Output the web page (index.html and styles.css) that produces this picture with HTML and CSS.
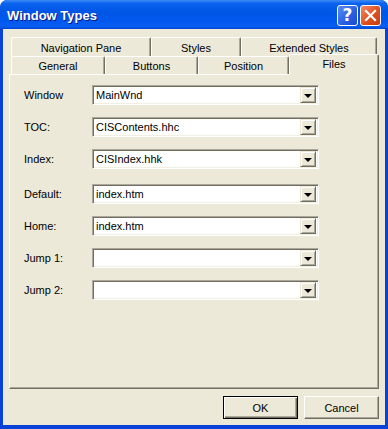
FILE: index.html
```html
<!DOCTYPE html>
<html lang="en">
<head>
  <meta charset="UTF-8" />
  <title>Window Types</title>
  <link rel="stylesheet" href="styles.css">
</head>
<body>
  <div class="window">
    <div class="titlebar">
      <span class="title">Window Types</span>
      <div class="caption-buttons">
        <span class="cap-btn help">?</span>
        <span class="cap-btn close">
          <svg viewBox="0 0 21 21" width="21" height="21">
            <path d="M6 6 L15 15 M15 6 L6 15" stroke="#fff" stroke-width="2.2" stroke-linecap="square" />
          </svg>
        </span>
      </div>
    </div>

    <div class="client">
      <div class="tabs">
        <div class="tab-row">
          <div class="tab w-nav">Navigation Pane</div>
          <div class="tab w-styles">Styles</div>
          <div class="tab w-ext">Extended Styles</div>
        </div>
        <div class="tab-row">
          <div class="tab w-general">General</div>
          <div class="tab w-buttons">Buttons</div>
          <div class="tab w-position">Position</div>
          <div class="tab w-files active">Files</div>
        </div>
      </div>

      <div class="panel">
        <div class="field">
          <span class="label">Window</span>
          <div class="combo"><span class="value">MainWnd</span><span class="drop"><i></i></span></div>
        </div>
        <div class="field">
          <span class="label">TOC:</span>
          <div class="combo"><span class="value">CISContents.hhc</span><span class="drop"><i></i></span></div>
        </div>
        <div class="field">
          <span class="label">Index:</span>
          <div class="combo"><span class="value">CISIndex.hhk</span><span class="drop"><i></i></span></div>
        </div>
        <div class="field spaced">
          <span class="label">Default:</span>
          <div class="combo"><span class="value">index.htm</span><span class="drop"><i></i></span></div>
        </div>
        <div class="field">
          <span class="label">Home:</span>
          <div class="combo"><span class="value">index.htm</span><span class="drop"><i></i></span></div>
        </div>
        <div class="field">
          <span class="label">Jump 1:</span>
          <div class="combo"><span class="value"></span><span class="drop"><i></i></span></div>
        </div>
        <div class="field">
          <span class="label">Jump 2:</span>
          <div class="combo"><span class="value"></span><span class="drop"><i></i></span></div>
        </div>
      </div>

      <div class="actions">
        <button class="btn default">OK</button>
        <button class="btn">Cancel</button>
      </div>
    </div>
  </div>
</body>
</html>
```

FILE: styles.css
```css
:root {
  --face: #ece9d8;
  --shadow: #aca899;
  --dark: #716f64;
  --light: #f1efe2;
  --frame: #0842d6;
}

html, body {
  margin: 0;
  padding: 0;
  background: #fff;
}

body {
  font-family: "Liberation Sans", Arial, sans-serif;
  font-size: 11px;
  color: #000;
}

.window {
  width: 388px;
  height: 429px;
  box-sizing: border-box;
  background: var(--frame);
  border-radius: 7px 7px 0 0;
  padding: 0 3px 4px 3px;
  display: flex;
  flex-direction: column;
  overflow: hidden;
}

/* Title bar */
.titlebar {
  height: 29px;
  margin: 0 -3px;
  padding: 0 7px;
  display: flex;
  align-items: center;
  justify-content: space-between;
  background: linear-gradient(#3d8cf5 0%, #0a63ee 12%, #0055e5 40%, #0058ee 75%, #0a5ff4 90%, #0046d4 100%);
  border-radius: 7px 7px 0 0;
}

.title {
  font-weight: bold;
  font-size: 13px;
  color: #fff;
  text-shadow: 1px 1px #0a1883;
  margin-top: 1px;
}

.caption-buttons {
  display: flex;
  gap: 2px;
  margin-top: 1px;
}

.cap-btn {
  width: 21px;
  height: 21px;
  box-sizing: border-box;
  border: 1px solid #fff;
  border-radius: 3px;
  display: flex;
  align-items: center;
  justify-content: center;
  color: #fff;
  font-weight: bold;
  font-size: 17px;
  font-family: "DejaVu Sans", sans-serif;
}

.cap-btn svg {
  margin: -1px;
}

.help {
  background: linear-gradient(135deg, #5a8cf0, #2a5ee0 60%, #1c4ad0);
}

.close {
  background: linear-gradient(135deg, #f08a6a, #e0501e 55%, #c83c14);
}

/* Client area */
.client {
  flex: 1;
  background: var(--face);
  padding: 8px 6px 0 6px;
  display: flex;
  flex-direction: column;
}

.tabs {
  padding-left: 2px;
  display: flex;
  flex-direction: column;
}

.tab-row {
  display: flex;
  height: 18px;
}

.tab-row:first-child {
  height: 19px;
}

.tab {
  box-sizing: border-box;
  height: 100%;
  border-left: 1px solid #fff;
  border-top: 1px solid #fff;
  border-right: 1px solid var(--dark);
  box-shadow: inset -1px 0 var(--shadow);
  border-radius: 2px 2px 0 0;
  display: flex;
  align-items: center;
  justify-content: center;
  padding-top: 1px;
}

.w-nav { width: 140px; }
.w-styles { width: 90px; }
.w-ext { width: 136px; }
.w-general { width: 94px; }
.w-buttons { width: 93px; }
.w-position { width: 91px; }

.tab.active {
  width: 90px;
  height: 21px;
  margin-top: -2px;
  margin-bottom: -1px;
  background: var(--face);
  position: relative;
  z-index: 1;
  align-items: flex-start;
  padding-top: 3px;
}

.panel {
  height: 315px;
  box-sizing: border-box;
  border-left: 1px solid #fff;
  border-top: 1px solid #fff;
  border-right: 1px solid var(--dark);
  border-bottom: 1px solid var(--dark);
  box-shadow: inset -1px -1px var(--shadow);
  padding: 10px 0 0 14px;
  display: flex;
  flex-direction: column;
  gap: 12px;
}

.field {
  display: flex;
  align-items: center;
  height: 20px;
}

.field.spaced {
  margin-top: 3px;
}

.label {
  width: 68px;
}

.combo {
  width: 227px;
  height: 20px;
  box-sizing: border-box;
  border: 1px solid;
  border-color: var(--shadow) #fff #fff var(--shadow);
  box-shadow: inset 1px 1px var(--dark), inset -1px -1px var(--light);
  background: #fff;
  display: flex;
  align-items: center;
  padding: 2px;
}

.value {
  flex: 1;
  padding-left: 1px;
}

.drop {
  width: 16px;
  height: 16px;
  box-sizing: border-box;
  background: var(--face);
  border: 1px solid;
  border-color: var(--face) var(--dark) var(--dark) var(--face);
  box-shadow: inset 1px 1px #fff, inset -1px -1px var(--shadow);
  display: flex;
  align-items: center;
  justify-content: center;
}

.drop i {
  width: 0;
  height: 0;
  border-left: 4px solid transparent;
  border-right: 4px solid transparent;
  border-top: 4px solid #000;
  margin-top: 1px;
}

/* Dialog buttons */
.actions {
  display: flex;
  justify-content: flex-end;
  gap: 6px;
  margin-top: 7px;
}

.btn {
  width: 75px;
  height: 23px;
  box-sizing: border-box;
  font-family: inherit;
  font-size: 11px;
  color: #000;
  background: var(--face);
  border: 1px solid;
  border-color: #fff var(--dark) var(--dark) #fff;
  box-shadow: inset -1px -1px var(--shadow);
  padding: 0;
}

.btn.default {
  border: 1px solid #000;
  box-shadow: inset 1px 1px #fff, inset -1px -1px var(--dark), inset -2px -2px var(--shadow);
}
```
